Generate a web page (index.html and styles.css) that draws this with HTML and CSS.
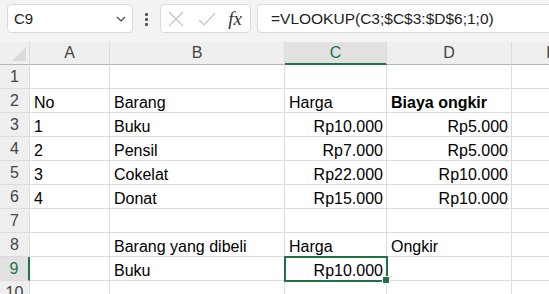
FILE: index.html
```html
<!DOCTYPE html>
<html>
	<head>
		<meta charset="utf-8" />
		<title>Sheet</title>
		<link rel="stylesheet" href="styles.css">
	</head>
	<body>
		<div class="app">
			<!-- formula bar -->
			<div class="fbar">
				<div class="namebox">
					<span>C9</span>
					<svg class="chev" width="10" height="6" viewBox="0 0 10 6"><path d="M1 1 L5 5 L9 1" fill="none" stroke="#444" stroke-width="1.1"/></svg>
				</div>
				<div class="dots"><i></i><i></i><i></i></div>
				<div class="fxbox">
					<svg width="18" height="18" viewBox="0 0 18 18"><path d="M2 2 L16 16 M16 2 L2 16" stroke="#c4c4c4" stroke-width="1.2"/></svg>
					<svg width="20" height="18" viewBox="0 0 20 18"><path d="M2 10 L7 15 L18 3" fill="none" stroke="#c4c4c4" stroke-width="1.2"/></svg>
					<span class="fx">fx</span>
				</div>
				<div class="formula">=VLOOKUP(C3;$C$3:$D$6;1;0)</div>
			</div>

			<!-- grid -->
			<div class="sheet">
				<div class="corner"><span class="tri"></span></div>
				<div class="ch">A</div>
				<div class="ch">B</div>
				<div class="ch sel">C</div>
				<div class="ch">D</div>
				<div class="ch">E</div>

				<div class="rh">1</div><div class="c"></div><div class="c"></div><div class="c"></div><div class="c"></div><div class="c"></div>

				<div class="rh">2</div><div class="c">No</div><div class="c">Barang</div><div class="c">Harga</div><div class="c b">Biaya ongkir</div><div class="c"></div>

				<div class="rh">3</div><div class="c">1</div><div class="c">Buku</div><div class="c r">Rp10.000</div><div class="c r">Rp5.000</div><div class="c"></div>

				<div class="rh">4</div><div class="c">2</div><div class="c">Pensil</div><div class="c r">Rp7.000</div><div class="c r">Rp5.000</div><div class="c"></div>

				<div class="rh">5</div><div class="c">3</div><div class="c">Cokelat</div><div class="c r">Rp22.000</div><div class="c r">Rp10.000</div><div class="c"></div>

				<div class="rh">6</div><div class="c">4</div><div class="c">Donat</div><div class="c r">Rp15.000</div><div class="c r">Rp10.000</div><div class="c"></div>

				<div class="rh">7</div><div class="c"></div><div class="c"></div><div class="c"></div><div class="c"></div><div class="c"></div>

				<div class="rh">8</div><div class="c"></div><div class="c">Barang yang dibeli</div><div class="c">Harga</div><div class="c">Ongkir</div><div class="c"></div>

				<div class="rh sel">9</div><div class="c"></div><div class="c">Buku</div><div class="c r active">Rp10.000<span class="handle"></span></div><div class="c"></div><div class="c"></div>

				<div class="rh">10</div><div class="c"></div><div class="c"></div><div class="c"></div><div class="c"></div><div class="c"></div>
			</div>
		</div>
	</body>
</html>
```

FILE: styles.css
```css
body{
	margin: 0;
	background: #fff;
	font-family: "Liberation Sans", Arial, sans-serif;
}
.app{
	width: 549px;
	height: 294px;
	overflow: hidden;
}
/* formula bar */
.fbar{
	height: 42px;
	background: #f3f3f3;
	display: flex;
	align-items: flex-start;
	padding: 4px 0 0 7px;
	box-sizing: border-box;
}
.namebox,.fxbox,.formula{
	height: 29px;
	box-sizing: border-box;
	background: #fff;
	border: 1px solid #dadada;
	border-radius: 4px;
	display: flex;
	align-items: center;
}
.namebox{
	width: 126px;
	padding: 0 6px 0 6px;
	justify-content: space-between;
	font-size: 15px;
	color: #222;
}
.dots{
	width: 27px;
	display: flex;
	flex-direction: column;
	align-items: center;
	gap: 2px;
	padding-top: 9px;
}
.dots i{
	width: 3px;
	height: 3px;
	background: #555;
	border-radius: 1px;
}
.fxbox{
	width: 91px;
	padding: 0 6px;
	justify-content: space-between;
}
.fx{
	font-family: "Liberation Serif", serif;
	font-style: italic;
	font-size: 19px;
	color: #333;
	padding-right: 2px;
}
.formula{
	margin-left: 6px;
	flex: 1;
	border-right: none;
	border-radius: 4px 0 0 4px;
	padding-left: 13px;
	font-size: 15.5px;
	color: #222;
}
/* grid */
.sheet{
	display: grid;
	grid-template-columns: 30px 80px 175px 102px 125px 80px;
	grid-template-rows: 23px repeat(10, 24px);
}
.sheet > div{
	box-sizing: border-box;
	border-right: 1px solid #dcdcdc;
	border-bottom: 1px solid #dcdcdc;
}
.corner,.ch,.rh{
	background: #efefef;
	color: #444;
	font-size: 16px;
}
.corner{
	position: relative;
	border-bottom-color: #b5b5b5 !important;
}
.tri{
	position: absolute;
	right: 3px;
	bottom: 3px;
	width: 0;
	height: 0;
	border-left: 14px solid transparent;
	border-bottom: 14px solid #dadada;
}
.ch{
	text-align: center;
	line-height: 22px;
	border-bottom-color: #b5b5b5 !important;
}
.ch.sel{
	background: #e1e1e1;
	color: #217346;
	border-bottom: 2px solid #217346 !important;
}
.rh{
	text-align: center;
	line-height: 24px;
}
.rh.sel{
	background: #e1e1e1;
	color: #217346;
	border-right: 2px solid #217346 !important;
}
.c{
	font-size: 16px;
	color: #000;
	line-height: 18px;
	padding: 5px 3px 0 4px;
	white-space: nowrap;
}
.c.r{
	text-align: right;
}
.c.b{
	font-weight: bold;
}
.c.active{
	position: relative;
	outline: 2px solid #217346;
	outline-offset: -1px;
}
.handle{
	position: absolute;
	right: -4px;
	bottom: -4px;
	width: 6px;
	height: 6px;
	background: #217346;
	border: 1px solid #fff;
}
```
